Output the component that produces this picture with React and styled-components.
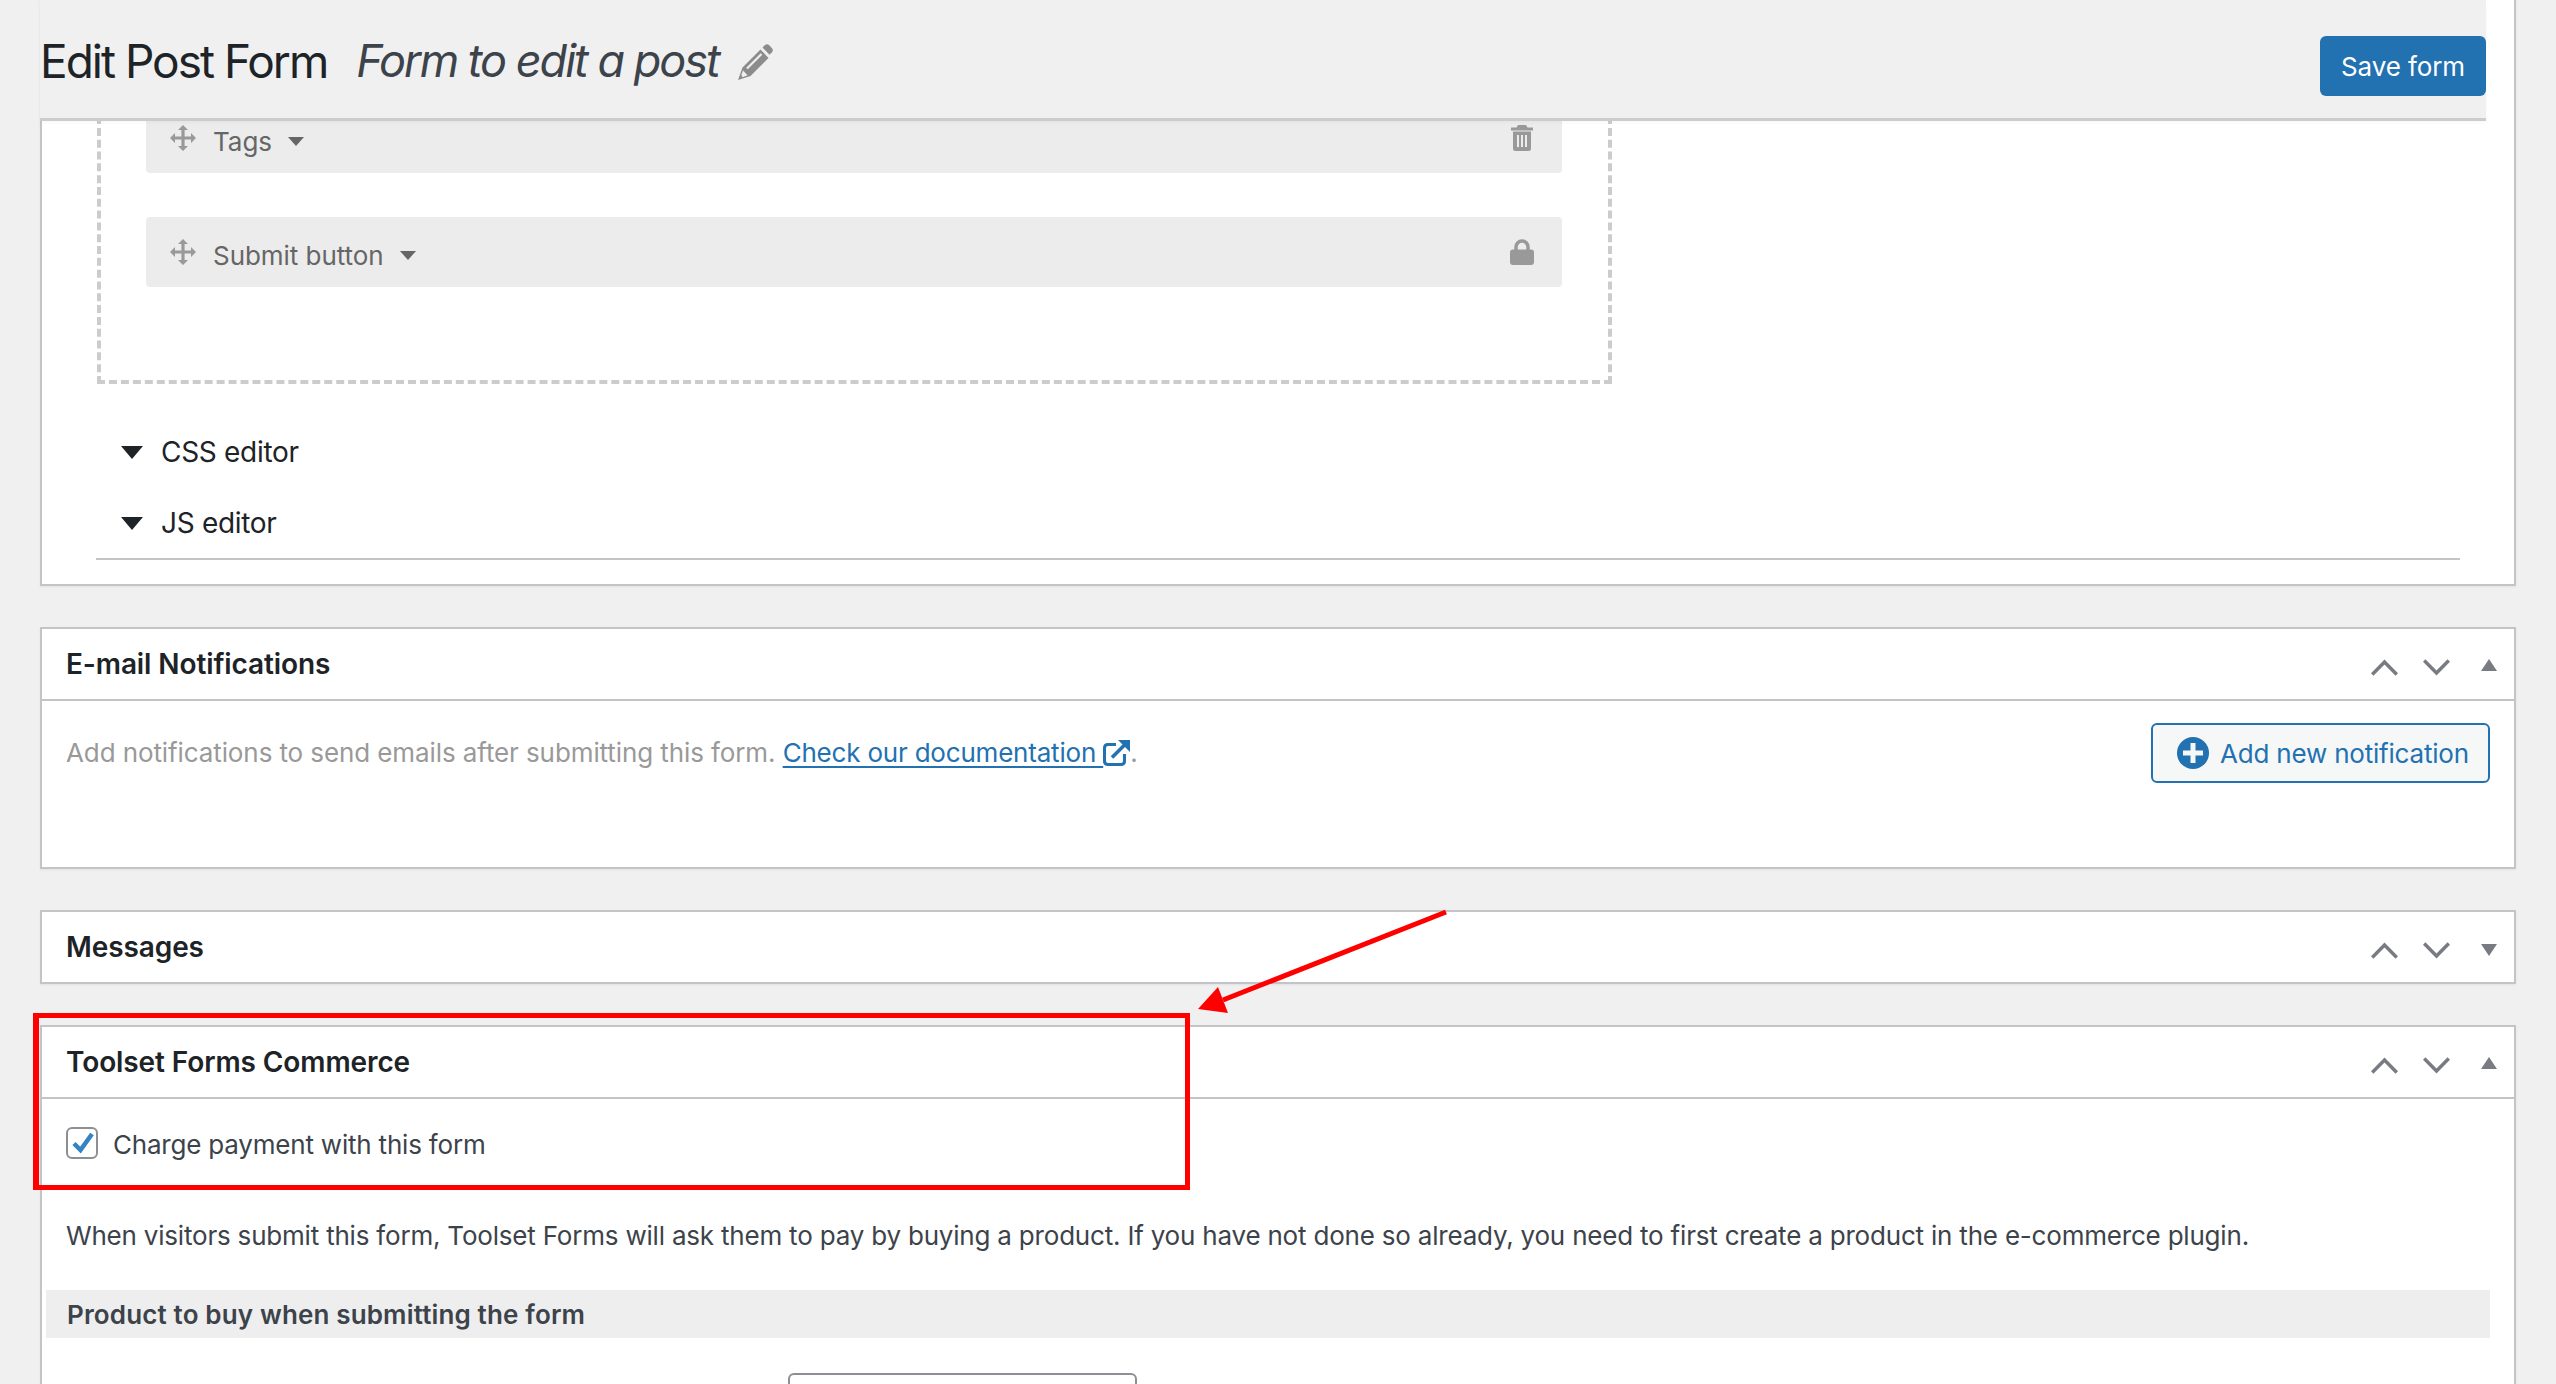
// App.jsx
import React from 'react';
import styled, { createGlobalStyle } from 'styled-components';

const GlobalStyle = createGlobalStyle`
  html, body {
    margin: 0;
    padding: 0;
    background: #f0f0f1;
  }
  body {
    font-family: Inter, 'Noto Sans', sans-serif;
    font-size: 26px;
    letter-spacing: -0.2px;
    color: #3c434a;
  }
`;

const Page = styled.div`
  position: relative;
  width: 2556px;
  height: 1384px;
  overflow: hidden;
  padding: 0 40px;
  box-sizing: border-box;
`;

const Panel = styled.section`
  background: #fff;
  border: 2px solid #c3c4c7;
  box-shadow: 0 1px 2px rgba(0, 0, 0, 0.06);
  margin-bottom: 41px;
`;

const EditorPanel = styled(Panel)`
  margin-top: -2px;
  height: 588px;
  box-sizing: border-box;
`;

const TopBar = styled.header`
  display: flex;
  align-items: center;
  justify-content: space-between;
  height: 121px;
  width: 2446px;
  margin-left: -2px;
  background: #f0f0f1;
  border-bottom: 3px solid #ccc;
  box-sizing: border-box;
  box-shadow: 0 2px 4px rgba(0, 0, 0, 0.03);
  position: relative;
`;

const TitleGroup = styled.div`
  display: flex;
  align-items: center;
  padding-top: 3px;
`;

const PageTitle = styled.h1`
  margin: 0;
  font-size: 46px;
  font-weight: 400;
  letter-spacing: -2px;
  color: #1d2327;
`;

const FormName = styled.span`
  margin-left: 29px;
  font-size: 45px;
  font-style: italic;
  letter-spacing: -2px;
  color: #3c434a;
`;

const PencilIcon = styled.svg`
  width: 35px;
  height: 36px;
  margin-left: 19px;
  margin-top: 2px;
`;

const SaveButton = styled.button`
  width: 166px;
  height: 60px;
  margin-top: 14px;
  border: 0;
  border-radius: 6px;
  background: #2271b1;
  color: #fff;
  font: 400 26px Inter, sans-serif;
  letter-spacing: -0.1px;
`;

const EditorBody = styled.div`
  padding-left: 54px;
`;

const Clip = styled.div`
  height: 263px;
  overflow: hidden;
`;

const DropZone = styled.div`
  width: 1515px;
  margin: -64px 0 0 1px;
  padding: 42px 46px 93px 45px;
  border: 4px dashed #ccc;
  box-sizing: border-box;
  display: flex;
  flex-direction: column;
  gap: 44px;
`;

const FieldRow = styled.div`
  display: flex;
  align-items: center;
  height: 70px;
  padding: 0 28px 0 24px;
  background: #ececec;
  border-radius: 4px;
  color: #666;
`;

const FieldLabel = styled.span`
  margin: 7px 16px 0 17px;
  letter-spacing: -0.05px;
`;

const FieldCaret = styled.svg`
  width: 16px;
  height: 9px;
  margin-top: 7px;
  flex: 1 0 auto;
  max-width: 16px;
`;

const RowEnd = styled.svg`
  margin-left: auto;
  width: 24px;
  height: 26px;
`;

const MoveIcon = styled.svg`
  width: 26px;
  height: 26px;
`;

const EditorToggle = styled.div`
  display: flex;
  align-items: center;
  height: 36px;
  margin-top: ${props => props.first ? '50px' : '35px'};
  padding-left: 25px;
  font-size: 28px;
  letter-spacing: -0.3px;
  color: #1d2327;
`;

const ToggleArrow = styled.svg`
  width: 22px;
  height: 13px;
  margin-right: 18px;
`;

const Divider = styled.div`
  width: 2364px;
  height: 2px;
  margin-top: 17px;
  background: #c3c4c7;
`;

const PanelHead = styled.div`
  display: flex;
  align-items: center;
  justify-content: space-between;
  height: 70px;
  padding: 0 17px 0 24px;
  border-bottom: ${props => props.open ? '2px solid #c3c4c7' : '0'};
`;

const PanelTitle = styled.h2`
  margin: 0;
  font-size: 28px;
  font-weight: 600;
  letter-spacing: -0.1px;
  color: #1d2327;
`;

const Controls = styled.div`
  display: flex;
  align-items: center;
  margin-top: 6px;
`;

const Chevron = styled.svg`
  width: 27px;
  height: 17px;
  margin-right: ${props => props.gap}px;
`;

const Triangle = styled.svg`
  width: 16px;
  height: 12px;
  margin-top: ${props => props.open ? '-4px' : '-1px'};
`;

const NoticeBody = styled.div`
  display: flex;
  align-items: flex-start;
  justify-content: space-between;
  height: 166px;
  padding: 22px 24px 0 24px;
  box-sizing: border-box;
`;

const Notice = styled.p`
  margin: 14px 0 0;
  color: #999;
  display: flex;
  align-items: center;
  white-space: pre;
  letter-spacing: -0.1px;
`;

const DocLink = styled.a`
  color: #2271b1;
  text-decoration: underline;
  text-underline-offset: 4px;
  letter-spacing: -0.2px;
`;

const ExternalIcon = styled.svg`
  width: 27px;
  height: 26px;
`;

const AddButton = styled.button`
  display: flex;
  align-items: center;
  gap: 11px;
  width: 339px;
  height: 60px;
  padding: 0 0 0 24px;
  border: 2px solid #2271b1;
  border-radius: 6px;
  background: #f6f7f7;
  color: #2271b1;
  font: 400 26px Inter, sans-serif;
  letter-spacing: -0.2px;
  box-sizing: border-box;
`;

const PlusIcon = styled.svg`
  width: 32px;
  height: 32px;
`;

const CommerceBody = styled.div`
  padding: 28px 0 0 24px;
`;

const CheckRow = styled.label`
  display: flex;
  align-items: center;
  gap: 15px;
  height: 32px;
`;

const CheckLabel = styled.span`
  padding-top: 2px;
`;

const CheckBox = styled.span`
  display: flex;
  width: 32px;
  height: 32px;
  border: 2px solid #8c8f94;
  border-radius: 6px;
  box-sizing: border-box;
`;

const CheckMark = styled.svg`
  width: 28px;
  height: 28px;
`;

const Intro = styled.p`
  margin: 57px 0 34px;
  line-height: 40px;
  white-space: nowrap;
`;

const SectionBand = styled.div`
  display: flex;
  align-items: center;
  height: 48px;
  margin: 0 24px 35px -20px;
  padding-left: 21px;
  background: #eee;
  font-weight: 600;
  letter-spacing: 0.15px;
`;

const ProductSelect = styled.div`
  width: 349px;
  height: 60px;
  margin-left: 722px;
  border: 2px solid #8c8f94;
  border-radius: 6px;
  box-sizing: border-box;
`;

const Highlight = styled.div`
  position: absolute;
  left: 33px;
  top: 1013px;
  width: 1157px;
  height: 177px;
  border: solid #f00;
  border-width: 5px 5px 5px 6px;
  box-sizing: border-box;
  pointer-events: none;
`;

const ArrowOverlay = styled.svg`
  position: absolute;
  left: 1190px;
  top: 905px;
  width: 260px;
  height: 112px;
  pointer-events: none;
`;

const Move = () => (
  <MoveIcon viewBox="0 0 26 26" fill="#999">
    <path d="M13 0l5 5h-3.4v6.4H21V8l5 5-5 5v-3.4h-6.4V21H18l-5 5-5-5h3.4v-6.4H5V18l-5-5 5-5v3.4h6.4V5H8z" />
  </MoveIcon>
);

const Caret = () => (
  <FieldCaret viewBox="0 0 16 9" fill="#666">
    <path d="M0 0h16l-8 9z" />
  </FieldCaret>
);

const Trash = () => (
  <RowEnd viewBox="0 0 24 26" fill="#999">
    <path d="M8 0h8l1.500 2.500H23V5.500H1V2.500h5.500z" />
    <path d="M3 6.500h18v17q0 2.500-2.500 2.500h-13Q3 26 3 23.500z" />
    <path d="M7 10h2v12H7zM11 10h2v12h-2zM15 10h2v12h-2z" fill="#ececec" />
  </RowEnd>
);

const Lock = () => (
  <RowEnd viewBox="0 0 24 26" fill="#999">
    <path d="M6 11V8a6 6 0 0 1 12 0v3" fill="none" stroke="#999" strokeWidth="3.500" />
    <rect y="10.500" width="24" height="15.500" rx="3" />
  </RowEnd>
);

const HeadControls = ({ open }) => (
  <Controls>
    <Chevron gap={25} viewBox="0 0 27 17" fill="none" stroke="#787c82" strokeWidth="3.500">
      <path d="M1.200 15.500L13.500 3l12.300 12.500" />
    </Chevron>
    <Chevron gap={31} viewBox="0 0 27 17" fill="none" stroke="#787c82" strokeWidth="3.500">
      <path d="M1.200 1.500L13.500 14 25.800 1.500" />
    </Chevron>
    <Triangle open={open} viewBox="0 0 16 12" fill="#787c82">
      <path d={open ? 'M8 0l8 12H0z' : 'M0 0h16L8 12z'} />
    </Triangle>
  </Controls>
);

const App = () => (
  <Page>
    <GlobalStyle />
    <EditorPanel>
      <TopBar>
        <TitleGroup>
          <PageTitle>Edit Post Form</PageTitle>
          <FormName>Form to edit a post</FormName>
          <PencilIcon viewBox="0 0 35 36" fill="#8c8c8c">
            <path d="M24.500 3.500l2.500-2.500q2-1.500 4 0l3 3.200q1.500 2 0 4l-2.500 2.500z" />
            <path d="M22.500 5.500l8 8.500L12.500 32 0 36l4.500-12.500z" />
            <path d="M9 24.500L23.500 10" stroke="#f0f0f1" strokeWidth="2.200" />
            <path d="M5 26.500l4.500 4.800-5 2-1.500-1.500z" fill="#f0f0f1" />
            <path d="M2.500 33l2-.8-1.300-1.300z" />
          </PencilIcon>
        </TitleGroup>
        <SaveButton>Save form</SaveButton>
      </TopBar>
      <EditorBody>
        <Clip>
          <DropZone>
            <FieldRow>
              <Move />
              <FieldLabel>Tags</FieldLabel>
              <Caret />
              <Trash />
            </FieldRow>
            <FieldRow>
              <Move />
              <FieldLabel>Submit button</FieldLabel>
              <Caret />
              <Lock />
            </FieldRow>
          </DropZone>
        </Clip>
        <EditorToggle first>
          <ToggleArrow viewBox="0 0 22 13" fill="#1d2327"><path d="M0 0h22L11 13z" /></ToggleArrow>
          CSS editor
        </EditorToggle>
        <EditorToggle>
          <ToggleArrow viewBox="0 0 22 13" fill="#1d2327"><path d="M0 0h22L11 13z" /></ToggleArrow>
          JS editor
        </EditorToggle>
        <Divider />
      </EditorBody>
    </EditorPanel>

    <Panel>
      <PanelHead open>
        <PanelTitle>E-mail Notifications</PanelTitle>
        <HeadControls open />
      </PanelHead>
      <NoticeBody>
        <Notice>
          Add notifications to send emails after submitting this form. <DocLink href="#">Check our documentation </DocLink>
          <ExternalIcon viewBox="0 0 27 26" fill="none" stroke="#2271b1">
            <path d="M13 4.500H5Q1.500 4.500 1.500 8v13q0 3.500 3.500 3.500h13q3.500 0 3.500-3.500v-7" strokeWidth="3" />
            <path d="M9 17.500L22 4.500" strokeWidth="3.600" />
            <path d="M15 0h12v12z" fill="#2271b1" stroke="none" />
          </ExternalIcon>
          .
        </Notice>
        <AddButton>
          <PlusIcon viewBox="0 0 32 32">
            <circle cx="16" cy="16" r="16" fill="#2271b1" />
            <path d="M13.500 6h5v7.500H26v5h-7.500V26h-5v-7.500H6v-5h7.500z" fill="#f6f7f7" />
          </PlusIcon>
          Add new notification
        </AddButton>
      </NoticeBody>
    </Panel>

    <Panel>
      <PanelHead>
        <PanelTitle>Messages</PanelTitle>
        <HeadControls />
      </PanelHead>
    </Panel>

    <Panel>
      <PanelHead open>
        <PanelTitle>Toolset Forms Commerce</PanelTitle>
        <HeadControls open />
      </PanelHead>
      <CommerceBody>
        <CheckRow>
          <CheckBox>
            <CheckMark viewBox="0 0 28 28" fill="none" stroke="#3582c4" strokeWidth="4.500">
              <path d="M6 14.500l6.500 6.500L24 5" />
            </CheckMark>
          </CheckBox>
          <CheckLabel>Charge payment with this form</CheckLabel>
        </CheckRow>
        <Intro>When visitors submit this form, Toolset Forms will ask them to pay by buying a product. If you have not done so already, you need to first create a product in the e-commerce plugin.</Intro>
        <SectionBand>Product to buy when submitting the form</SectionBand>
        <ProductSelect />
      </CommerceBody>
    </Panel>

    <Highlight />
    <ArrowOverlay viewBox="0 0 260 112" fill="#f00">
      <path d="M256 7L33 95" stroke="#f00" strokeWidth="5" />
      <path d="M8 104L28 82 38 108z" />
    </ArrowOverlay>
  </Page>
);

export default App;
